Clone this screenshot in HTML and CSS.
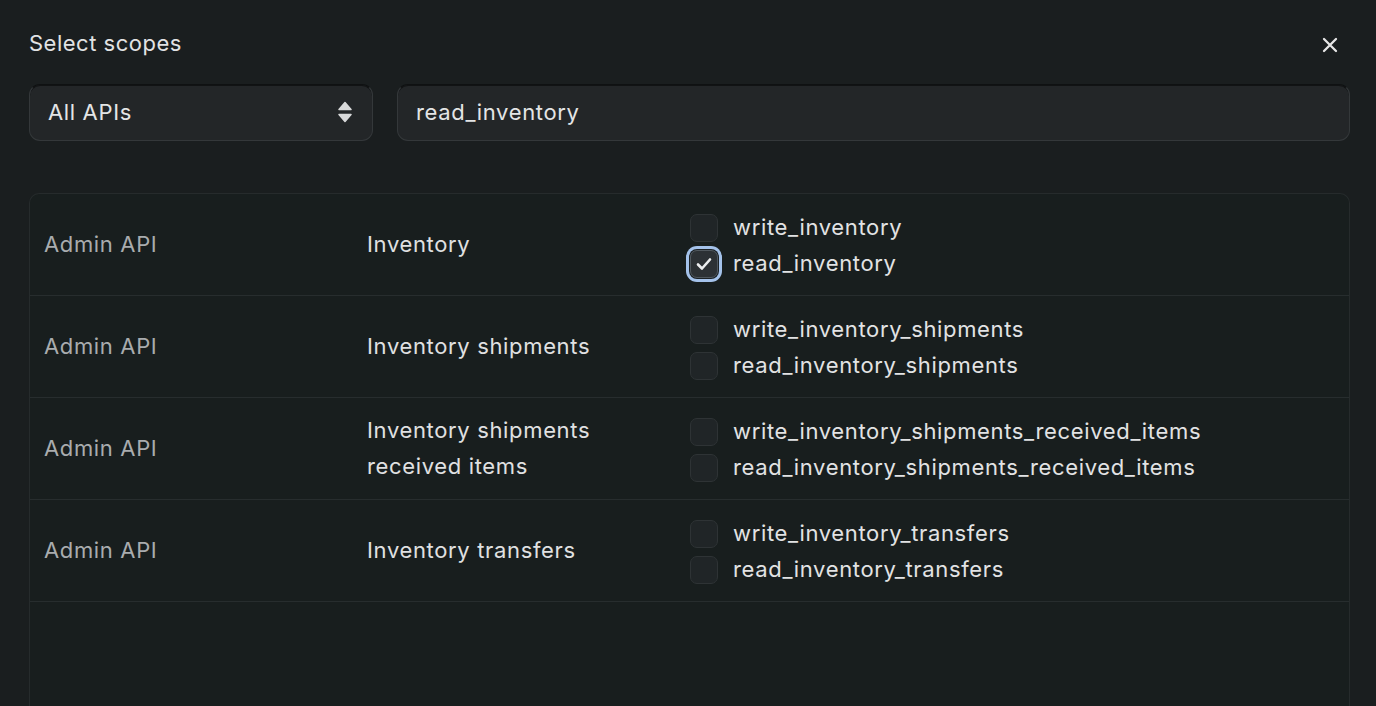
FILE: index.html
```html
<!DOCTYPE html>
<html>
<head>
<meta charset="utf-8">
<link rel="stylesheet" href="styles.css">
</head>
<body>
<div class="dialog">
  <header class="head">
    <h1 class="title">Select scopes</h1>
    <button class="close" aria-label="Close">
      <svg width="16" height="16" viewBox="0 0 16 16"><path d="M2 2L14 14M14 2L2 14" stroke="#e6e6e6" stroke-width="2.3" stroke-linecap="round"/></svg>
    </button>
  </header>
  <div class="filters">
    <div class="select">
      <span>All APIs</span>
      <svg width="14" height="22" viewBox="0 0 14 22"><path d="M7 1.5L13 8.5H1Z M7 20.5L13 13.5H1Z" fill="#d8d9da" stroke="#d8d9da" stroke-width="1.5" stroke-linejoin="round"/></svg>
    </div>
    <div class="search">read_inventory</div>
  </div>
  <div class="table">
    <div class="row">
      <div class="api">Admin API</div>
      <div class="res">Inventory</div>
      <div class="scopes">
        <label class="scope"><span class="box"></span>write_inventory</label>
        <label class="scope"><span class="box checked"><svg width="16" height="14" viewBox="0 0 16 14"><path d="M2 7.5L6 11.5L14 2.5" fill="none" stroke="#eceef0" stroke-width="2.6" stroke-linecap="round" stroke-linejoin="round"/></svg></span>read_inventory</label>
      </div>
    </div>
    <div class="row">
      <div class="api">Admin API</div>
      <div class="res">Inventory shipments</div>
      <div class="scopes">
        <label class="scope"><span class="box"></span>write_inventory_shipments</label>
        <label class="scope"><span class="box"></span>read_inventory_shipments</label>
      </div>
    </div>
    <div class="row">
      <div class="api">Admin API</div>
      <div class="res">Inventory shipments received items</div>
      <div class="scopes">
        <label class="scope"><span class="box"></span>write_inventory_shipments_received_items</label>
        <label class="scope"><span class="box"></span>read_inventory_shipments_received_items</label>
      </div>
    </div>
    <div class="row">
      <div class="api">Admin API</div>
      <div class="res">Inventory transfers</div>
      <div class="scopes">
        <label class="scope"><span class="box"></span>write_inventory_transfers</label>
        <label class="scope"><span class="box"></span>read_inventory_transfers</label>
      </div>
    </div>
  </div>
</div>
</body>
</html>
```
FILE: styles.css
```css
* { box-sizing: border-box; }
html, body {
  margin: 0;
  height: 100%;
  background: #1a1e1f;
  overflow: hidden;
}
body {
  font-family: Inter, "Noto Sans", "Liberation Sans", sans-serif;
  color: #e4e5e6;
  letter-spacing: 0.65px;
}
.dialog {
  padding: 27px 26px 0 29px;
}
.head {
  display: flex;
  align-items: center;
  justify-content: space-between;
  height: 32px;
}
.title {
  margin: 0;
  font-size: 22px;
  font-weight: 400;
  color: #e2e3e4;
  letter-spacing: 0.5px;
}
.close {
  background: none;
  border: 0;
  padding: 0;
  margin-right: 8px;
  width: 24px;
  height: 24px;
  display: flex;
  align-items: center;
  justify-content: center;
  margin-top: 4px;
}
.filters {
  display: flex;
  gap: 24px;
  margin-top: 25px;
}
.select, .search {
  height: 57px;
  border-radius: 11px;
  background: #232628;
  border: 1px solid #34383a;
  border-top-color: #0f1112;
  box-shadow: inset 0 1px 0 #111314;
  display: flex;
  align-items: center;
  font-size: 22px;
  color: #e4e5e6;
  padding-bottom: 1px;
}
.select {
  width: 344px;
  flex: none;
  padding-left: 18px;
  padding-right: 20px;
  justify-content: space-between;
}
.search {
  flex: 1;
  padding-left: 18px;
  padding-right: 18px;
}
.table {
  margin-top: 52px;
  border: 1px solid #262b2c;
  border-bottom: 0;
  border-radius: 10px 10px 0 0;
  background: #181e1e;
  height: 600px;
}
.row {
  display: grid;
  grid-template-columns: 323px 323px 1fr;
  border-bottom: 1px solid #272d2e;
  height: 102px;
  align-items: center;
  font-size: 22px;
}
.api {
  padding-left: 14px;
  color: #a9acae;
  padding-bottom: 2px;
}
.res {
  padding-left: 14px;
  padding-right: 20px;
  color: #e0e1e2;
  line-height: 36px;
  padding-bottom: 2px;
}
.scopes {
  padding-left: 14px;
  display: flex;
  flex-direction: column;
}
.scope {
  display: flex;
  align-items: center;
  height: 36px;
  gap: 15px;
  color: #e2e3e4;
}
.box {
  width: 28px;
  height: 28px;
  border-radius: 7px;
  background: #202527;
  border: 1px solid #2e3335;
  display: flex;
  align-items: center;
  justify-content: center;
  flex: none;
  margin-top: 2px;
}
.box.checked {
  background: #2c3135;
  border: 1px solid #50585e;
  box-shadow: 0 0 0 1px #1c2226, 0 0 0 4px #a4c2ea;
}
```
